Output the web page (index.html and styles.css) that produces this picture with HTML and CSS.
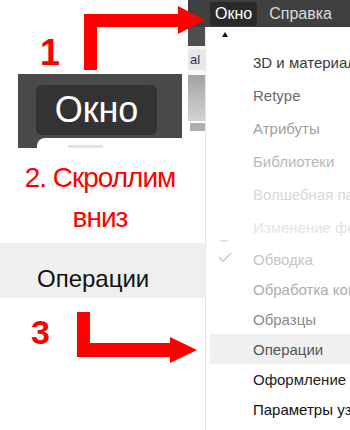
FILE: index.html
```html
<!DOCTYPE html>
<html>
<head>
    <title>Окно - Операции</title>
    <link rel="stylesheet" href="styles.css">
</head>
<body>
    <div class="page">
        <div class="left">
            <div class="step-one"><span class="num">1</span></div>
            <div class="okno-panel">
                <div class="okno-btn">Окно</div>
                <div class="okno-menu"><span></span></div>
            </div>
            <div class="step-two">2. Скроллим<br>вниз</div>
            <div class="op-band">Операции</div>
            <div class="step-three"><span class="num num-3">3</span></div>
        </div>

        <div class="right">
            <div class="menubar">
                <span class="mb-item active">Окно</span>
                <span class="mb-item">Справка</span>
            </div>
            <div class="right-body">
                <div class="bg-strip">
                    <div class="s1"></div>
                    <div class="s2"></div>
                    <div class="s3">al</div>
                    <div class="s4"></div>
                    <div class="s5"></div>
                    <div class="s6"></div>
                    <div class="s7"></div>
                </div>
                <ul class="menu">
                    <li class="scroll-up"><span></span></li>
                    <li class="item tall c1"><span class="mark"></span>3D и материалы</li>
                    <li class="item tall c2"><span class="mark"></span>Retype</li>
                    <li class="item tall c3"><span class="mark"></span>Атрибуты</li>
                    <li class="item tall c4"><span class="mark"></span>Библиотеки</li>
                    <li class="item tall c5"><span class="mark"></span>Волшебная палочка</li>
                    <li class="item tall c6">
                        <span class="mark"><svg width="43" height="33"><path d="M10 30H18" stroke="#dcdcdc" stroke-width="1.5"/></svg></span>Изменение формы
                    </li>
                    <li class="item c7">
                        <span class="mark"><svg width="43" height="30"><path d="M9 13L13 17.5L21 9" fill="none" stroke="#c6c6c6" stroke-width="1.3"/></svg></span>Обводка
                    </li>
                    <li class="item c8"><span class="mark"></span>Обработка контура</li>
                    <li class="item c9"><span class="mark"></span>Образцы</li>
                    <li class="item c10 hover"><span class="mark"></span>Операции</li>
                    <li class="item c11"><span class="mark"></span>Оформление</li>
                    <li class="item c12"><span class="mark"></span>Параметры узла</li>
                </ul>
            </div>
        </div>

        <svg class="arrows" width="350" height="430">
            <polygon points="84,70 97,70 97,27 178,27 178,34 205,20 178,6 178,14 84,14" fill="#ff0000"/>
            <polygon points="77,312 90,312 90,343 170,343 170,337 197,350 170,363 170,357 77,357" fill="#ff0000"/>
        </svg>
    </div>
</body>
</html>
```

FILE: styles.css
```css
body {
    margin: 0;
    font-family: "Liberation Sans", Arial, sans-serif;
}
.page {
    position: relative;
    display: flex;
    width: 350px;
    height: 430px;
    overflow: hidden;
    background: #fff;
}
.arrows {
    position: absolute;
    left: 0;
    top: 0;
    pointer-events: none;
}

/* left: the steps */
.left {
    width: 188px;
    flex: none;
}
.num {
    color: #ff0000;
    font-weight: bold;
    font-size: 36px;
    line-height: 36px;
}
.num-3 {
    font-size: 34px;
    line-height: 34px;
}
.step-one {
    height: 74px;
    box-sizing: border-box;
    padding: 35px 0 0 40px;
}
.okno-panel {
    margin-left: 18px;
    width: 164px;
    height: 74px;
    box-sizing: border-box;
    padding: 11px 0 0 18px;
    background: #4a4a4a;
    overflow: hidden;
}
.okno-btn {
    width: 121px;
    height: 50px;
    background: #333;
    border-radius: 6px;
    color: #fff;
    font-size: 36px;
    line-height: 50px;
    text-align: center;
}
.okno-menu {
    margin: 3px 0 0 1px;
    height: 12px;
    box-sizing: border-box;
    padding: 7px 0 0 31px;
    background: #fff;
    border-radius: 8px 0 0 0;
}
.okno-menu span {
    display: block;
    width: 35px;
    height: 5px;
    background: #e2e2e2;
}
.step-two {
    height: 95px;
    box-sizing: border-box;
    padding: 10px 0 0 12px;
    color: #ff0000;
    font-size: 28px;
    line-height: 40px;
    letter-spacing: -1px;
    text-align: center;
}
.op-band {
    width: 205px;
    height: 55px;
    box-sizing: border-box;
    padding: 24px 0 0 37px;
    background: #efefef;
    color: #111;
    font-size: 24px;
    line-height: 24px;
}
.step-three {
    padding: 17px 0 0 31px;
}

/* right: the menu screenshot */
.right {
    flex: 1;
    display: flex;
    flex-direction: column;
}
.menubar {
    height: 27px;
    flex: none;
    display: flex;
    align-items: center;
    gap: 7px;
    padding-left: 22px;
    background: #404040;
}
.mb-item {
    height: 24px;
    line-height: 24px;
    padding: 0 5px;
    font-size: 16px;
    color: #dcdcdc;
    border-radius: 3px;
}
.mb-item.active {
    background: #2a2a2a;
    color: #fff;
}
.right-body {
    flex: 1;
    display: flex;
}
.bg-strip {
    width: 17px;
    flex: none;
    display: flex;
    flex-direction: column;
}
.s1 { height: 19px; background: #4e4e4e; }
.s2 { height: 3px; background: #f4f4f4; }
.s3 {
    height: 21px;
    background: #e8e8ea;
    color: #2c3550;
    font-size: 13px;
    line-height: 21px;
    padding-left: 2px;
}
.s4 { height: 5px; background: #fafafa; }
.s5 { height: 46px; background: linear-gradient(#a2a2a2, #d4d4d4); }
.s6 { height: 2px; background: #fff; }
.s7 { height: 8px; margin-left: 2px; background: #b0b0b0; }

.menu {
    flex: 1;
    margin: 0;
    padding: 0 0 0 4px;
    list-style: none;
    border-left: 1px solid #e6e6e6;
    background: #fff;
    font-size: 15px;
    overflow: hidden;
}
.scroll-up {
    height: 19px;
    box-sizing: border-box;
    padding: 5px 0 0 12px;
}
.scroll-up span {
    display: block;
    width: 0;
    height: 0;
    border-left: 3px solid transparent;
    border-right: 3px solid transparent;
    border-bottom: 5px solid #111;
}
.item {
    display: flex;
    align-items: center;
    height: 30px;
    white-space: nowrap;
}
.item.tall {
    height: 33px;
}
.mark {
    width: 43px;
    height: 100%;
    flex: none;
}
.mark svg {
    display: block;
}
.hover {
    background: #f0f0f0;
}
.c1 { color: #3a3a3a; }
.c2 { color: #6a6a6a; }
.c3 { color: #a0a0a0; }
.c4 { color: #b8b8b8; }
.c5 { color: #d8d8d8; }
.c6 { color: #e4e4e4; }
.c7 { color: #c4c4c4; }
.c8 { color: #acacac; }
.c9 { color: #8a8a8a; }
.c10 { color: #555; }
.c11 { color: #222; }
.c12 { color: #111; }
```
